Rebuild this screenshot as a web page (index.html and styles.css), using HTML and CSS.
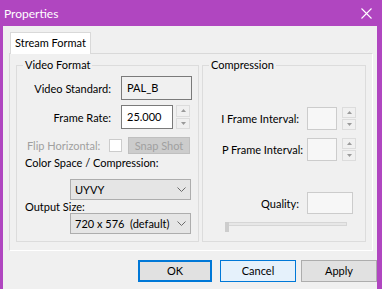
FILE: index.html
```html
<!DOCTYPE html>
<html lang="en">
  <head>
    <meta charset="UTF-8" />
    <title>Properties</title>
    <link rel="stylesheet" href="styles.css">
  </head>
  <body>
    <div class="window">
      <div class="titlebar">
        <span class="title">Properties</span>
        <svg class="close" width="11" height="11" viewBox="0 0 11 11">
          <path d="M0.5 0.5 L10.5 10.5 M10.5 0.5 L0.5 10.5" stroke="#fff" stroke-width="1.1" fill="none" />
        </svg>
      </div>

      <div class="client">
        <div class="tabs">
          <div class="tab">Stream Format</div>
        </div>

        <div class="page">
          <div class="group video">
            <span class="caption">Video Format</span>

            <div class="row r-std">
              <span class="lbl">Video Standard:</span>
              <div class="field readonly w-std">PAL_B</div>
            </div>

            <div class="row r-rate">
              <span class="lbl">Frame Rate:</span>
              <div class="field w-rate">25.000</div>
              <div class="spin">
                <span><svg width="5" height="3" viewBox="0 0 5 3"><path d="M0 3 L2.5 0 L5 3 Z" fill="#9a9a9a" /></svg></span>
                <span><svg width="5" height="3" viewBox="0 0 5 3"><path d="M0 0 L5 0 L2.5 3 Z" fill="#9a9a9a" /></svg></span>
              </div>
            </div>

            <div class="row r-flip">
              <span class="lbl-flip">Flip Horizontal:</span>
              <span class="check"></span>
              <div class="btn-disabled">Snap Shot</div>
            </div>

            <div class="text-row r-cs">Color Space / Compression:</div>
            <div class="combo c-first">
              <span>UYVY</span>
              <svg width="9" height="5" viewBox="0 0 9 5"><path d="M0.5 0.5 L4.5 4.5 L8.5 0.5" stroke="#6a6a6a" fill="none" /></svg>
            </div>

            <div class="text-row r-out">Output Size:</div>
            <div class="combo">
              <span>720 x 576&nbsp; (default)</span>
              <svg width="9" height="5" viewBox="0 0 9 5"><path d="M0.5 0.5 L4.5 4.5 L8.5 0.5" stroke="#6a6a6a" fill="none" /></svg>
            </div>
          </div>

          <div class="group compression">
            <span class="caption">Compression</span>

            <div class="row r-iframe">
              <span class="lbl lbl-i">I Frame Interval:</span>
              <div class="field disabled w-int"></div>
              <div class="spin small">
                <span><svg width="5" height="3" viewBox="0 0 5 3"><path d="M0 3 L2.5 0 L5 3 Z" fill="#9a9a9a" /></svg></span>
                <span><svg width="5" height="3" viewBox="0 0 5 3"><path d="M0 0 L5 0 L2.5 3 Z" fill="#9a9a9a" /></svg></span>
              </div>
            </div>

            <div class="row r-pframe">
              <span class="lbl lbl-p">P Frame Interval:</span>
              <div class="field disabled w-int"></div>
              <div class="spin small">
                <span><svg width="5" height="3" viewBox="0 0 5 3"><path d="M0 3 L2.5 0 L5 3 Z" fill="#9a9a9a" /></svg></span>
                <span><svg width="5" height="3" viewBox="0 0 5 3"><path d="M0 0 L5 0 L2.5 3 Z" fill="#9a9a9a" /></svg></span>
              </div>
            </div>

            <div class="row r-quality">
              <span class="lbl lbl-i">Quality:</span>
              <div class="field disabled w-q"></div>
            </div>

            <div class="slider">
              <div class="track"></div>
              <div class="thumb"></div>
            </div>
          </div>
        </div>

        <div class="buttons">
          <div class="btn btn-ok">OK</div>
          <div class="btn btn-cancel">Cancel</div>
          <div class="btn btn-apply">Apply</div>
        </div>
      </div>
    </div>
  </body>
</html>
```

FILE: styles.css
```css
* {
  box-sizing: border-box;
}
body {
  margin: 0;
  background-color: #b046c0;
  font-family: Lato, "Noto Sans", sans-serif;
  font-size: 11px;
  color: #000;
}
.window {
  width: 382px;
  height: 289px;
  display: flex;
  flex-direction: column;
}
.titlebar {
  height: 26px;
  display: flex;
  align-items: center;
  justify-content: space-between;
  padding: 0 10px 0 4px;
  color: #fff;
  font-size: 12px;
}
.client {
  flex: 1;
  margin: 0 5px 0 3px;
  background-color: #f0f0f0;
}
.tabs {
  display: flex;
  padding: 6px 0 0 7px;
  position: relative;
  z-index: 1;
}
.tab {
  width: 81px;
  height: 22px;
  margin-bottom: -1px;
  padding-left: 4px;
  line-height: 20px;
  background-color: #fff;
  border: 1px solid #d9d9d9;
  border-bottom: none;
}
.page {
  display: flex;
  gap: 3px;
  width: 364px;
  height: 198px;
  margin-left: 6px;
  padding: 11px 0 0 6px;
  border: 1px solid #d9d9d9;
  border-right-color: #fff;
  border-bottom-color: #fff;
}
.group {
  position: relative;
  height: 177px;
  border: 1px solid #dcdcdc;
}
.video {
  width: 183px;
  padding-top: 10px;
}
.compression {
  width: 164px;
  padding-top: 41px;
}
.caption {
  position: absolute;
  top: -9px;
  left: 6px;
  padding: 0 2px;
  line-height: 16px;
  background-color: #f0f0f0;
}
.row {
  display: flex;
  align-items: center;
}
.lbl {
  width: 94px;
  text-align: right;
}
.field {
  height: 24px;
  margin-left: 10px;
  padding-left: 5px;
  line-height: 22px;
  background-color: #fff;
  border: 1px solid #7a7a7a;
}
.field.readonly {
  background-color: #f0f0f0;
}
.field.disabled {
  background-color: #f7f7f7;
  border-color: #cccccc;
}
.w-std {
  width: 71px;
}
.w-rate {
  width: 52px;
}
.r-std,
.r-rate {
  height: 24px;
}
.r-rate {
  margin-top: 5px;
}
.spin {
  display: flex;
  flex-direction: column;
  width: 14px;
  height: 24px;
  margin-left: 3px;
  gap: 1px;
}
.spin span {
  flex: 1;
  display: flex;
  align-items: center;
  justify-content: center;
  background-color: #f0f0f0;
  border: 1px solid #dcdcdc;
}
.spin.small {
  height: 23px;
  margin-left: 5px;
}
.r-flip {
  height: 17px;
  margin-top: 8px;
  padding-left: 10px;
}
.lbl-flip {
  width: 82px;
  color: #a0a0a0;
}
.check {
  width: 13px;
  height: 13px;
  background-color: #fff;
  border: 1px solid #cccccc;
}
.btn-disabled {
  width: 62px;
  height: 17px;
  margin-left: 6px;
  line-height: 15px;
  text-align: center;
  color: #a0a0a0;
  background-color: #cccccc;
  border: 1px solid #bfbfbf;
}
.text-row {
  padding-left: 8px;
}
.r-cs {
  margin-top: 1px;
  line-height: 16px;
}
.r-out {
  line-height: 13px;
}
.combo {
  display: flex;
  align-items: center;
  justify-content: space-between;
  width: 121px;
  height: 21px;
  margin-left: 53px;
  padding: 0 4px 0 4px;
  background-color: #e5e5e5;
  border: 1px solid #adadad;
}
.c-first {
  margin-top: 8px;
}
.r-iframe,
.r-pframe {
  height: 23px;
}
.r-pframe {
  margin-top: 8px;
}
.lbl-i {
  width: 96px;
}
.lbl-p {
  width: 100px;
}
.r-iframe .field,
.r-quality .field {
  margin-left: 8px;
}
.r-pframe .field {
  margin-left: 4px;
}
.r-iframe .field,
.r-pframe .field {
  height: 23px;
}
.w-int {
  width: 30px;
}
.w-q {
  width: 46px;
}
.r-quality {
  height: 22px;
  margin-top: 31px;
}
.r-quality .field {
  height: 22px;
}
.slider {
  position: relative;
  height: 10px;
  margin: 8px 0 0 22px;
}
.track {
  width: 122px;
  height: 4px;
  margin-top: 4px;
  background-color: #e7e7e7;
  border: 1px solid #d6d6d6;
}
.thumb {
  position: absolute;
  top: 0;
  left: 0;
  width: 4px;
  height: 10px;
  background-color: #cdcdcd;
}
.buttons {
  display: flex;
  padding: 9px 0 0 135px;
}
.btn {
  height: 22px;
  line-height: 20px;
  text-align: center;
  background-color: #e1e1e1;
  border: 1px solid #adadad;
}
.btn-ok {
  width: 74px;
  line-height: 18px;
  border: 2px solid #0078d7;
}
.btn-cancel {
  width: 76px;
  margin-left: 8px;
  background-color: #e5f1fb;
  border-color: #0078d7;
}
.btn-apply {
  width: 76px;
  margin-left: 5px;
}
```
